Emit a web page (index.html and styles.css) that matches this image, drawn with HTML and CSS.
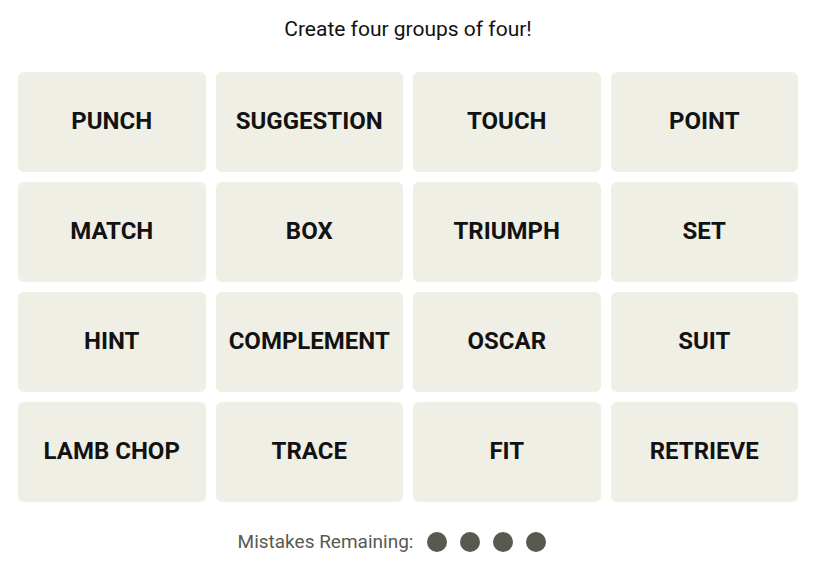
FILE: index.html
```html
<!DOCTYPE html>
<html>
<head>
<meta charset="utf-8">
<link rel="stylesheet" href="styles.css">
</head>
<body>
<div class="page">
  <h1 class="title">Create four groups of four!</h1>
  <div class="grid">
    <div class="tile">PUNCH</div>
    <div class="tile">SUGGESTION</div>
    <div class="tile">TOUCH</div>
    <div class="tile">POINT</div>
    <div class="tile">MATCH</div>
    <div class="tile">BOX</div>
    <div class="tile">TRIUMPH</div>
    <div class="tile">SET</div>
    <div class="tile">HINT</div>
    <div class="tile">COMPLEMENT</div>
    <div class="tile">OSCAR</div>
    <div class="tile">SUIT</div>
    <div class="tile">LAMB CHOP</div>
    <div class="tile">TRACE</div>
    <div class="tile">FIT</div>
    <div class="tile">RETRIEVE</div>
  </div>
  <div class="mistakes">
    <span class="mistakes-label">Mistakes Remaining:</span>
    <div class="dots">
      <span class="dot"></span>
      <span class="dot"></span>
      <span class="dot"></span>
      <span class="dot"></span>
    </div>
  </div>
</div>
</body>
</html>
```

FILE: styles.css
```css
html, body {
  margin: 0;
  padding: 0;
  background: #ffffff;
}

.page {
  width: 780px;
  padding: 0 0 0 18px;
  font-family: Roboto, "Liberation Sans", sans-serif;
  color: #121212;
}

.title {
  margin: 0;
  padding-top: 17px;
  height: 72px;
  box-sizing: border-box;
  font-size: 21px;
  line-height: 24px;
  font-weight: 400;
  text-align: center;
}

.grid {
  display: grid;
  grid-template-columns: repeat(4, 1fr);
  grid-auto-rows: 100px;
  gap: 10px;
}

.tile {
  background: #efefe6;
  border-radius: 6px;
  display: flex;
  align-items: center;
  justify-content: center;
  padding-bottom: 2px;
  box-sizing: border-box;
  font-size: 24px;
  font-weight: 700;
  color: #121212;
}

.mistakes {
  display: flex;
  align-items: center;
  justify-content: center;
  margin-top: 29px;
  padding-right: 32px;
  color: #5a594e;
}

.mistakes-label {
  font-size: 19px;
  line-height: 22px;
}

.dots {
  display: flex;
  gap: 13px;
  margin-left: 14px;
}

.dot {
  width: 20px;
  height: 20px;
  border-radius: 50%;
  background: #5a594e;
}
```
